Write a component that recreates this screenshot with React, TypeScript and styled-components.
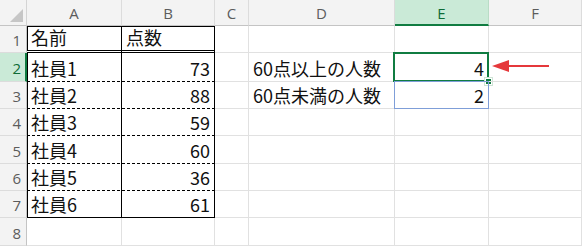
import React from 'react';
import styled, { createGlobalStyle, css } from 'styled-components';

const GlobalStyle = createGlobalStyle`
  html, body {
    margin: 0;
    padding: 0;
    background: #ffffff;
  }
`;

const colWidths = [27, 95, 93, 34, 146, 94, 93];
const rowHeights = [26, 27, 29, 27, 27, 28, 27, 27, 28];
const colNames = ['A', 'B', 'C', 'D', 'E', 'F'];

const names = ['名前', '社員1', '社員2', '社員3', '社員4', '社員5', '社員6'];
const scores = ['点数', '73', '88', '59', '60', '36', '61'];

const Sheet = styled.div`
  display: grid;
  grid-template-columns: ${colWidths.map((w) => `${w}px`).join(' ')};
  grid-template-rows: ${rowHeights.map((h) => `${h}px`).join(' ')};
  width: 582px;
  height: 246px;
  overflow: hidden;
  font-family: 'Noto Sans CJK JP', 'Noto Sans', sans-serif;
`;

const Corner = styled.div`
  position: relative;
  background: #f3f3f3;
  border-right: 1px solid #d4d4d4;
  border-bottom: 1px solid #c4c4c4;

  &::after {
    content: '';
    position: absolute;
    right: 3px;
    bottom: 3px;
    width: 0;
    height: 0;
    border-left: 13px solid transparent;
    border-bottom: 13px solid #c6c6c6;
  }
`;

const ColHead = styled.div<{ $active?: boolean }>`
  box-sizing: border-box;
  display: flex;
  align-items: center;
  justify-content: center;
  padding-top: 1px;
  background: #f3f3f3;
  border-right: 1px solid #dcdcdc;
  border-bottom: 1px solid #c4c4c4;
  color: #5c5c5c;
  font-family: 'Open Sans', 'Noto Sans', sans-serif;
  font-size: 15px;

  ${({ $active }) =>
    $active &&
    css`
      background: #caead7;
      color: #0e6b36;
      border-right-color: #b9dcc6;
      border-bottom: 2px solid #107c41;
    `}
`;

const RowHead = styled.div<{ $active?: boolean }>`
  box-sizing: border-box;
  display: flex;
  align-items: center;
  justify-content: flex-end;
  padding: 2px 5px 0 0;
  background: #f3f3f3;
  border-right: 1px solid #c4c4c4;
  border-bottom: 1px solid #dcdcdc;
  color: #5c5c5c;
  font-family: 'Open Sans', 'Noto Sans', sans-serif;
  font-size: 15px;

  ${({ $active }) =>
    $active &&
    css`
      background: #caead7;
      color: #0e6b36;
      border-right: 2px solid #107c41;
      padding-right: 4px;
    `}
`;

type Edge = 'solid' | 'double' | 'dashed' | undefined;

const Cell = styled.div<{
  $right?: boolean;
  $numeric?: boolean;
  $top?: boolean;
  $left?: boolean;
  $blackRight?: boolean;
  $bottom?: Edge;
}>`
  position: relative;
  box-sizing: border-box;
  display: flex;
  align-items: flex-end;
  justify-content: ${({ $right }) => ($right ? 'flex-end' : 'flex-start')};
  padding: 0 4px 1px 4px;
  border-right: 1px solid ${({ $blackRight }) => ($blackRight ? '#000' : '#e1e1e1')};
  border-bottom: 1px solid #e1e1e1;
  color: #111;
  font-size: 18px;
  line-height: 24px;
  white-space: nowrap;

  ${({ $top, $left }) =>
    ($top || $left) &&
    css`
      box-shadow: ${[$top && 'inset 0 1px 0 #000', $left && 'inset 1px 0 0 #000']
        .filter(Boolean)
        .join(', ')};
    `}

  ${({ $bottom }) =>
    $bottom === 'solid' &&
    css`
      border-bottom-color: #000;
    `}

  ${({ $bottom }) =>
    $bottom === 'double' &&
    css`
      border-bottom: 3px double #000;
    `}

  ${({ $bottom }) =>
    $bottom === 'dashed' &&
    css`
      border-bottom: 0;
      padding-bottom: 2px;
      background-image: repeating-linear-gradient(90deg, #000 0 3px, transparent 3px 5px);
      background-size: 100% 1px;
      background-position: bottom left;
      background-repeat: no-repeat;
    `}
`;

const Selected = styled.div`
  position: absolute;
  left: -2px;
  top: -1px;
  right: -1px;
  bottom: -1px;
  border: 2px solid #107c41;
  pointer-events: none;
`;

const FillHandle = styled.div`
  position: absolute;
  right: -4px;
  bottom: -4px;
  width: 5px;
  height: 5px;
  background: #107c41;
  border: 1px solid #ffffff;
  outline: 1px solid #cfe4d6;
`;

const Related = styled.div`
  position: absolute;
  left: -1px;
  top: -1px;
  right: -1px;
  bottom: -1px;
  border: 1px solid #7f9ed8;
  pointer-events: none;
`;

const Arrow = styled.svg`
  position: absolute;
  left: 1px;
  top: 6px;
  overflow: visible;
`;

const tableBottom = (row: number): Edge => {
  if (row === 1) return 'double';
  if (row === 7) return 'solid';
  if (row >= 2 && row <= 6) return 'dashed';
  return undefined;
};

const App: React.FC = () => {
  const rows = Array.from({ length: 8 }, (_, i) => i + 1);

  return (
    <>
      <GlobalStyle />
      <Sheet>
        <Corner />
        {colNames.map((c) => (
          <ColHead key={c} $active={c === 'E'}>
            {c}
          </ColHead>
        ))}

        {rows.map((r) => {
          const inTable = r <= 7;
          const bottom = tableBottom(r);
          return (
            <React.Fragment key={r}>
              <RowHead $active={r === 2}>{r}</RowHead>

              <Cell
                $top={r === 1}
                $left={inTable}
                $blackRight={inTable}
                $bottom={bottom}
              >
                {inTable ? names[r - 1] : ''}
              </Cell>

              <Cell
                $right={r !== 1}
                $top={r === 1}
                $blackRight={inTable}
                $bottom={bottom}
              >
                {inTable ? scores[r - 1] : ''}
              </Cell>

              <Cell />

              <Cell>
                {r === 2 && '60点以上の人数'}
                {r === 3 && '60点未満の人数'}
              </Cell>

              <Cell $right>
                {r === 2 && (
                  <>
                    4
                    <Selected />
                    <FillHandle />
                  </>
                )}
                {r === 3 && (
                  <>
                    2
                    <Related />
                  </>
                )}
              </Cell>

              <Cell>
                {r === 2 && (
                  <Arrow width="60" height="14" viewBox="0 0 60 14">
                    <line x1="14" y1="7" x2="59" y2="7" stroke="#e5383b" strokeWidth="2" />
                    <polygon points="2,7 19,1 19,13" fill="#e5383b" />
                  </Arrow>
                )}
              </Cell>
            </React.Fragment>
          );
        })}
      </Sheet>
    </>
  );
};

export default App;
